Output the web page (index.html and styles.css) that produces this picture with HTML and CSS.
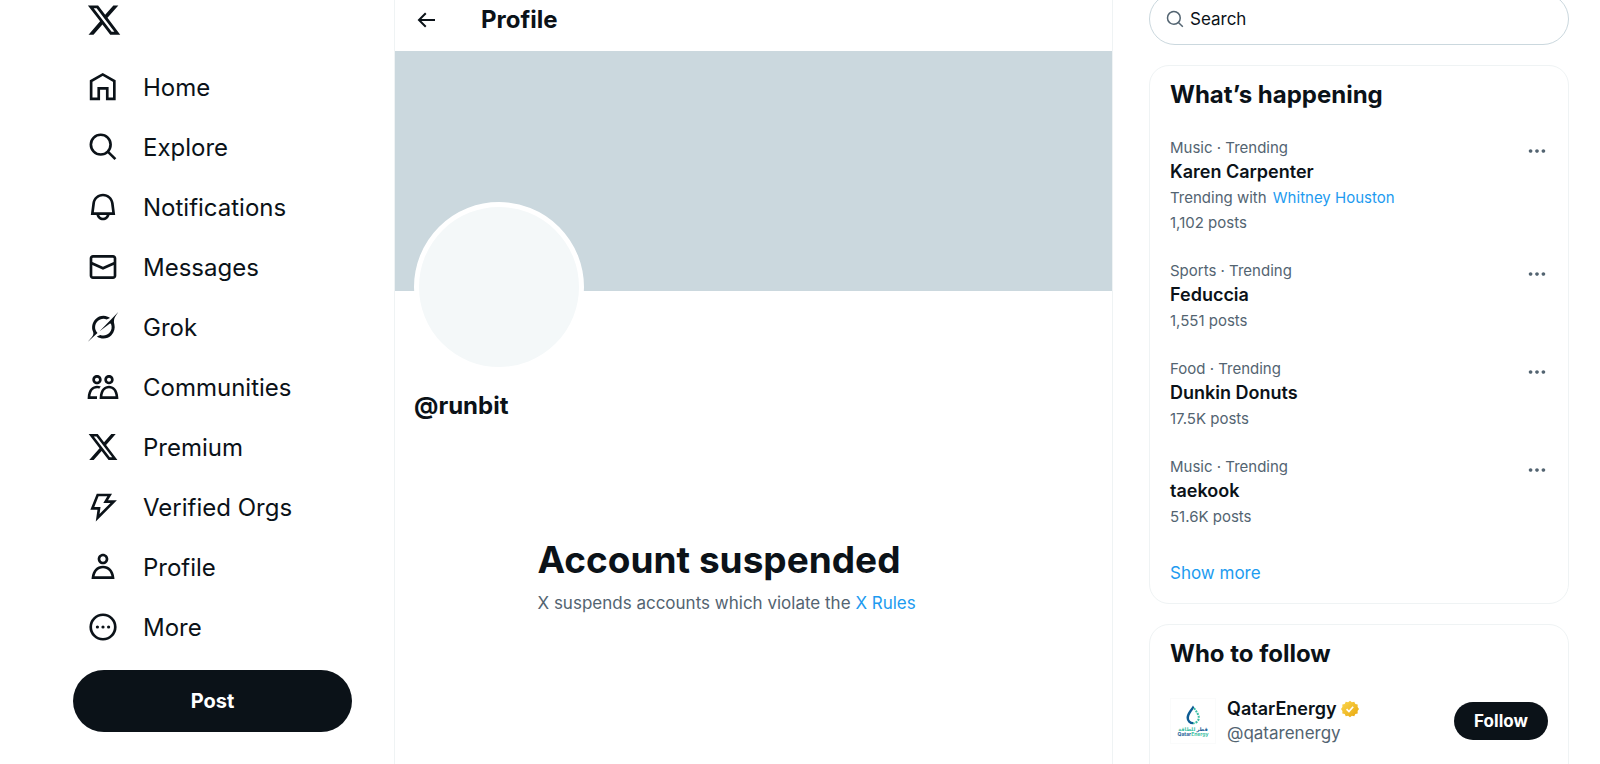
FILE: index.html
```
<!DOCTYPE html>
<html lang="en">
<head>
  <meta charset="UTF-8">
  <meta name="viewport" content="width=device-width, initial-scale=1.0">
  <title>Profile / X</title>
  <link rel="stylesheet" href="styles.css">
</head>
<body>
  <!-- Shared icon shapes -->
  <svg class="icon-defs" aria-hidden="true">
    <symbol id="icon-x" viewBox="0 0 24 24">
      <path d="M18.244 2.25h3.308l-7.227 8.26 8.502 11.24H16.17l-5.214-6.817L4.99 21.75H1.68l7.73-8.835L1.254 2.25H8.08l4.713 6.231zm-1.161 17.52h1.833L7.084 4.126H5.117z"/>
    </symbol>
    <symbol id="icon-dots" viewBox="0 0 24 24">
      <path d="M3 12c0-1.1.9-2 2-2s2 .9 2 2-.9 2-2 2-2-.9-2-2zm9 2c1.1 0 2-.9 2-2s-.9-2-2-2-2 .9-2 2 .9 2 2 2zm7 0c1.1 0 2-.9 2-2s-.9-2-2-2-2 .9-2 2 .9 2 2 2z"/>
    </symbol>
  </svg>

  <div class="layout">
    <header class="sidebar">
      <a class="logo" href="#" aria-label="X">
        <svg class="logo-icon"><use href="#icon-x"/></svg>
      </a>
      <nav class="nav">
        <a class="nav-link" href="#">
          <svg class="nav-icon line-icon" viewBox="0 0 24 24"><path d="M3.1 20.9V7.6l8.700-5 8.700 5v13.300h-5.300V13H8.800v7.900z"/></svg>
          <span>Home</span>
        </a>
        <a class="nav-link" href="#">
          <svg class="nav-icon line-icon" viewBox="0 0 24 24"><circle cx="10.3" cy="10.2" r="7.4"/><path d="M15.6 15.5l5.7 5.6"/></svg>
          <span>Explore</span>
        </a>
        <a class="nav-link" href="#">
          <svg class="nav-icon" viewBox="0 0 24 24"><path d="M19.993 9.042C19.48 5.017 16.054 2 11.996 2s-7.49 3.021-7.999 7.051L2.866 18H7.1c.463 2.282 2.481 4 4.9 4s4.437-1.718 4.9-4h4.236l-1.143-8.958zM12 20c-1.306 0-2.417-.835-2.829-2h5.658c-.412 1.165-1.523 2-2.829 2zm-6.866-4l.847-6.698C6.364 6.272 8.941 4 11.996 4s5.627 2.268 6.013 5.295L18.864 16H5.134z"/></svg>
          <span>Notifications</span>
        </a>
        <a class="nav-link" href="#">
          <svg class="nav-icon" viewBox="0 0 24 24"><path d="M1.998 5.5c0-1.381 1.119-2.5 2.5-2.5h15c1.381 0 2.5 1.119 2.5 2.5v13c0 1.381-1.119 2.5-2.5 2.5h-15c-1.381 0-2.5-1.119-2.5-2.5v-13zm2.5-.5c-.276 0-.5.224-.5.5v2.764l8 3.638 8-3.636V5.5c0-.276-.224-.5-.5-.5h-15zm15.5 5.463l-8 3.636-8-3.638V18.5c0 .276.224.5.5.5h15c.276 0 .5-.224.5-.5v-8.037z"/></svg>
          <span>Messages</span>
        </a>
        <a class="nav-link" href="#">
          <svg class="nav-icon" viewBox="-1 0 35 32"><path d="M12.745 20.54l10.97-8.19c.539-.4 1.307-.244 1.564.38 1.349 3.288.746 7.241-1.938 9.955-2.683 2.714-6.417 3.31-9.83 1.954l-3.728 1.745c5.347 3.697 11.84 2.782 15.898-1.324 3.219-3.255 4.216-7.692 3.284-11.693l.008.009c-1.351-5.878.332-8.227 3.782-13.031L33 0l-4.54 4.59v-.014L12.743 20.544m-2.263 1.987c-3.837-3.707-3.175-9.446.1-12.755 2.42-2.449 6.388-3.448 9.852-1.979l3.72-1.737c-.67-.49-1.53-1.017-2.515-1.387-4.455-1.854-9.789-.931-13.41 2.728-3.483 3.523-4.579 8.94-2.697 13.561 1.405 3.454-.899 5.898-3.22 8.364C1.49 30.2.666 31.074 0 32l10.478-9.466"/></svg>
          <span>Grok</span>
        </a>
        <a class="nav-link" href="#">
          <svg class="nav-icon" viewBox="0 0 24 24"><path d="M7.501 19.917L7.471 21H.472l.029-1.027c.184-6.618 3.736-8.977 7-8.977.963 0 1.95.212 2.87.672-.444.478-.851 1.03-1.212 1.656-.507-.204-1.054-.329-1.658-.329-2.767 0-4.57 2.223-4.938 6.004H7.56c-.023.302-.05.599-.059.918zm15.998.056L23.528 21H9.472l.029-1.027c.184-6.618 3.736-8.977 7-8.977s6.816 2.358 7 8.977zM21.437 19c-.367-3.781-2.17-6.004-4.938-6.004s-4.57 2.223-4.938 6.004h9.875zm-4.938-9c-.799 0-1.527-.279-2.116-.73-.836-.64-1.384-1.638-1.384-2.77 0-1.93 1.567-3.5 3.5-3.5s3.5 1.57 3.5 3.5c0 1.132-.548 2.13-1.384 2.77-.589.451-1.317.73-2.116.73zm-1.5-3.5c0 .827.673 1.5 1.5 1.5s1.5-.673 1.5-1.5-.673-1.5-1.5-1.5-1.5.673-1.5 1.5zM7.5 3C9.433 3 11 4.57 11 6.5S9.433 10 7.5 10 4 8.43 4 6.5 5.567 3 7.5 3zm0 2C6.673 5 6 5.673 6 6.5S6.673 8 7.5 8 9 7.327 9 6.5 8.327 5 7.5 5z"/></svg>
          <span>Communities</span>
        </a>
        <a class="nav-link" href="#">
          <svg class="nav-icon"><use href="#icon-x"/></svg>
          <span>Premium</span>
        </a>
        <a class="nav-link" href="#">
          <svg class="nav-icon" viewBox="0 0 24 24"><path d="M7.323 2h11.443l-3 5h6.648L6.586 22.83 7.847 14H2.523l4.8-12zm1.354 2l-3.2 8h4.676l-.739 5.17L17.586 9h-5.352l3-5H8.677z"/></svg>
          <span>Verified Orgs</span>
        </a>
        <a class="nav-link" href="#">
          <svg class="nav-icon" viewBox="0 0 24 24"><path d="M5.651 19h12.698c-.337-1.8-1.023-3.21-1.945-4.19C15.318 13.65 13.838 13 12 13s-3.317.65-4.404 1.81c-.922.98-1.608 2.39-1.945 4.19zm.486-5.56C7.627 11.85 9.648 11 12 11s4.373.85 5.863 2.44c1.477 1.58 2.366 3.8 2.632 6.46l.11 1.1H3.395l.11-1.1c.266-2.66 1.155-4.88 2.632-6.46zM12 4c-1.105 0-2 .9-2 2s.895 2 2 2 2-.9 2-2-.895-2-2-2zM8 6c0-2.21 1.791-4 4-4s4 1.79 4 4-1.791 4-4 4-4-1.79-4-4z"/></svg>
          <span>Profile</span>
        </a>
        <a class="nav-link" href="#">
          <svg class="nav-icon" viewBox="0 0 24 24"><circle class="ring" cx="12" cy="12" r="9.2"/><circle cx="7.8" cy="12" r="1.2"/><circle cx="12" cy="12" r="1.2"/><circle cx="16.2" cy="12" r="1.2"/></svg>
          <span>More</span>
        </a>
      </nav>
      <button class="post-button" type="button">Post</button>
    </header>

    <main class="main">
      <div class="topbar">
        <button class="back-button" type="button" aria-label="Back">
          <svg class="back-icon" viewBox="0 0 24 24"><path d="M7.414 13l5.043 5.04-1.414 1.42L3.586 12l7.457-7.46 1.414 1.42L7.414 11H21v2H7.414z"/></svg>
        </button>
        <h1 class="page-title">Profile</h1>
      </div>
      <div class="banner"></div>
      <div class="profile">
        <div class="avatar"></div>
        <h2 class="handle">@runbit</h2>
      </div>
      <section class="notice">
        <h2 class="notice-title">Account suspended</h2>
        <p class="notice-text">X suspends accounts which violate the <a class="link" href="#">X Rules</a></p>
      </section>
    </main>

    <aside class="side">
      <form class="search">
        <svg class="search-icon line-icon" viewBox="0 0 24 24"><circle cx="10.5" cy="10.5" r="8.5"/><path d="M16.6 16.6l5.8 5.8"/></svg>
        <input class="search-input" type="text" placeholder="Search" aria-label="Search">
      </form>

      <section class="card">
        <h2 class="card-title">What’s happening</h2>
        <ul class="trends">
          <li class="trend">
            <div class="trend-body">
              <div class="trend-meta">Music · Trending</div>
              <div class="trend-name">Karen Carpenter</div>
              <div class="trend-info">Trending with <a class="link trend-link" href="#">Whitney Houston</a></div>
              <div class="trend-info">1,102 posts</div>
            </div>
            <button class="dots" type="button" aria-label="More"><svg class="dots-icon"><use href="#icon-dots"/></svg></button>
          </li>
          <li class="trend">
            <div class="trend-body">
              <div class="trend-meta">Sports · Trending</div>
              <div class="trend-name">Feduccia</div>
              <div class="trend-info">1,551 posts</div>
            </div>
            <button class="dots" type="button" aria-label="More"><svg class="dots-icon"><use href="#icon-dots"/></svg></button>
          </li>
          <li class="trend">
            <div class="trend-body">
              <div class="trend-meta">Food · Trending</div>
              <div class="trend-name">Dunkin Donuts</div>
              <div class="trend-info">17.5K posts</div>
            </div>
            <button class="dots" type="button" aria-label="More"><svg class="dots-icon"><use href="#icon-dots"/></svg></button>
          </li>
          <li class="trend">
            <div class="trend-body">
              <div class="trend-meta">Music · Trending</div>
              <div class="trend-name">taekook</div>
              <div class="trend-info">51.6K posts</div>
            </div>
            <button class="dots" type="button" aria-label="More"><svg class="dots-icon"><use href="#icon-dots"/></svg></button>
          </li>
        </ul>
        <a class="link show-more" href="#">Show more</a>
      </section>

      <section class="card follow-card">
        <h2 class="card-title">Who to follow</h2>
        <div class="user">
          <svg class="user-avatar" viewBox="0 0 46 46" role="img" aria-label="QatarEnergy">
            <rect class="avatar-frame" x="0.5" y="0.5" width="45" height="45"/>
            <path class="drop-dark" d="M23 7.5c-3 4.6-6.500 8.300-6.500 12.300a6.500 6.500 0 0 0 6.500 6.500v-2.200a4 4 0 0 1-4-4.300c0-2.700 2-5.300 4.300-8.500l.9-1.900z"/>
            <path class="drop-light" d="M24 10c2.600 3.800 4.800 6.700 4.800 9.800a5.700 5.700 0 0 1-5.800 5.500"/>
            <text class="logo-text logo-green" x="23" y="33" text-anchor="middle"><tspan class="logo-blue">قطر</tspan> للطاقة</text>
            <text class="logo-text logo-blue" x="23" y="38" text-anchor="middle">Qatar<tspan class="logo-green">Energy</tspan></text>
          </svg>
          <div class="user-body">
            <div class="user-name">
              QatarEnergy
              <svg class="badge" viewBox="0 0 22 22" role="img" aria-label="Verified">
                <defs>
                  <linearGradient id="gold" x1="0" y1="0" x2="1" y2="1">
                    <stop offset="0" stop-color="#fbd750"/>
                    <stop offset="1" stop-color="#e8a60c"/>
                  </linearGradient>
                </defs>
                <path fill="url(#gold)" d="M11 1l2.300 1.900 2.900-.8 1.300 2.700 2.900.7-.1 3L22 11l-1.700 2.500.1 3-2.900.7-1.300 2.700-2.900-.8L11 21l-2.300-1.900-2.900.8-1.300-2.700-2.900-.7.100-3L0 11l1.700-2.500-.1-3 2.900-.7 1.300-2.700 2.900.8z"/>
                <path class="badge-tick" d="M6.800 11.200l2.900 2.900 5.200-5.800"/>
              </svg>
            </div>
            <div class="user-handle">@qatarenergy</div>
          </div>
          <button class="follow-button" type="button">Follow</button>
        </div>
      </section>
    </aside>
  </div>
</body>
</html>
```
FILE: styles.css
```
:root {
  --text: #0b1218;
  --muted: #536471;
  --link: #1d9bf0;
  --border: #eff3f4;
  --search-border: #cbd8de;
  --banner: #cbd8de;
  --avatar: #f4f8f9;
}

* {
  box-sizing: border-box;
}

body {
  margin: 0;
  background-color: #fff;
  color: var(--text);
  font-family: Inter, "Liberation Sans", sans-serif;
  font-size: 17px;
  overflow: hidden;
}

h1, h2, p, ul {
  margin: 0;
  padding: 0;
}

ul {
  list-style: none;
}

a {
  color: inherit;
  text-decoration: none;
}

button {
  font-family: inherit;
  border: none;
  padding: 0;
  cursor: pointer;
}

svg {
  display: block;
  fill: currentColor;
}

.icon-defs {
  display: none;
}

.link {
  color: var(--link);
}

.link:hover {
  text-decoration: underline;
}

.line-icon {
  fill: none;
  stroke: currentColor;
  stroke-width: 2;
}

.layout {
  display: grid;
  grid-template-columns: 394fr 719fr 487fr;
  height: 100vh;
}

/* Left navigation */
.sidebar {
  padding: 0 42px 0 73px;
}

.logo {
  display: flex;
  padding: 2px 0 19px 13px;
}

.logo-icon {
  width: 36px;
  height: 36px;
}

.nav {
  display: flex;
  flex-direction: column;
}

.nav-link {
  display: flex;
  align-items: center;
  gap: 24px;
  height: 60px;
  padding-left: 14px;
  font-size: 24px;
}

.nav-icon {
  width: 32px;
  height: 32px;
}

.ring {
  fill: none;
  stroke: currentColor;
  stroke-width: 2;
}

.post-button {
  width: 100%;
  height: 62px;
  margin-top: 13px;
  border-radius: 31px;
  background-color: var(--text);
  color: #fff;
  font-size: 20px;
  font-weight: 700;
}

/* Profile column */
.main {
  border-left: 1px solid var(--border);
  border-right: 1px solid var(--border);
}

.topbar {
  display: flex;
  align-items: center;
  gap: 43px;
  height: 51px;
  padding: 0 19px 12px;
}

.back-button {
  background: none;
  color: var(--text);
}

.back-icon {
  width: 24px;
  height: 24px;
}

.page-title {
  font-size: 24px;
  font-weight: 700;
}

.banner {
  height: 240px;
  background-color: var(--banner);
}

.profile {
  padding: 0 19px;
}

.avatar {
  width: 170px;
  height: 170px;
  margin-top: -89px;
  border: 5px solid #fff;
  border-radius: 50%;
  background-color: var(--avatar);
}

.handle {
  margin-top: 20px;
  font-size: 24px;
  font-weight: 700;
  line-height: 28px;
}

.notice {
  max-width: 432px;
  margin: 116px auto 0;
}

.notice-title {
  font-size: 37px;
  font-weight: 700;
  line-height: 48px;
}

.notice-text {
  margin-top: 7px;
  color: var(--muted);
  line-height: 24px;
}

/* Right column */
.side {
  padding: 0 31px 0 36px;
  overflow: hidden;
}

.search {
  display: flex;
  align-items: center;
  gap: 6px;
  height: 52px;
  margin-top: -7px;
  padding-left: 16px;
  border: 1px solid var(--search-border);
  border-radius: 26px;
}

.search-icon {
  flex: none;
  width: 18px;
  height: 18px;
  color: var(--muted);
}

.search-input {
  flex: 1;
  min-width: 0;
  padding: 0;
  border: none;
  outline: none;
  background: none;
  color: var(--text);
  font-family: inherit;
  font-size: 17px;
}

.search-input::placeholder {
  color: var(--text);
}

.card {
  margin-top: 20px;
  border: 1px solid var(--border);
  border-radius: 20px;
}

.card-title {
  padding: 14px 20px;
  font-size: 24px;
  font-weight: 700;
  line-height: 30px;
}

.trend {
  display: flex;
  justify-content: space-between;
  align-items: flex-start;
  padding: 13px 20px 12px;
}

.trend-meta,
.trend-info {
  color: var(--muted);
  font-size: 15px;
  line-height: 25px;
}

.trend-meta {
  line-height: 22px;
}

.trend-name {
  font-size: 18px;
  font-weight: 600;
  line-height: 26px;
}

.trend-link {
  margin-left: 2px;
}

.dots {
  margin-top: 3px;
  background: none;
  color: var(--muted);
}

.dots-icon {
  width: 22px;
  height: 22px;
}

.show-more {
  display: block;
  padding: 20px 20px 18px;
  line-height: 24px;
}

.follow-card {
  padding-bottom: 40px;
}

.user {
  display: flex;
  align-items: center;
  padding: 13px 20px;
}

.user-avatar {
  width: 46px;
  height: 46px;
  margin-right: 11px;
}

.avatar-frame {
  fill: #fff;
  stroke: #fafbfb;
}

.drop-dark {
  fill: #0d5c94;
}

.drop-light {
  fill: none;
  stroke: #3dbfa5;
  stroke-width: 2;
  stroke-dasharray: 2 1;
}

.logo-text {
  font-family: Inter, "DejaVu Sans", sans-serif;
  font-size: 5px;
  font-weight: 700;
}

.logo-blue {
  fill: #1c5f97;
}

.logo-green {
  fill: #3dbfa5;
}

.user-body {
  flex: 1;
  min-width: 0;
}

.user-name {
  display: flex;
  align-items: center;
  gap: 4px;
  font-size: 18px;
  font-weight: 600;
  line-height: 25px;
}

.badge {
  width: 18px;
  height: 18px;
}

.badge-tick {
  fill: none;
  stroke: #fff;
  stroke-width: 2;
}

.user-handle {
  color: var(--muted);
  line-height: 25px;
}

.follow-button {
  width: 94px;
  height: 38px;
  border-radius: 19px;
  background-color: var(--text);
  color: #fff;
  font-size: 17px;
  font-weight: 700;
}
```
